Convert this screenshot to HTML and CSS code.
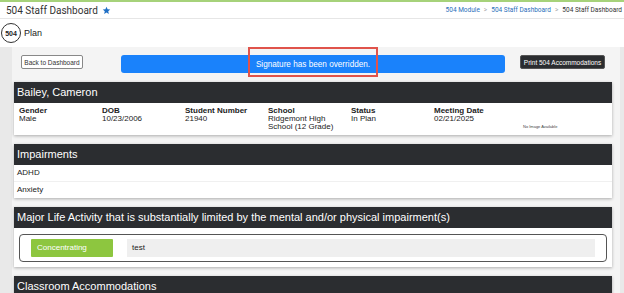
FILE: index.html
```html
<!DOCTYPE html>
<html lang="en">
<head>
<meta name="viewport" content="width=device-width, initial-scale=1">
<title>504 Plan</title>
<link rel="stylesheet" href="styles.css">
</head>
<body>
<div class="topbar">
    <div class="page-title">504 Staff Dashboard
        <svg class="star" viewBox="0 0 24 24" width="9" height="9"><path d="M12 2l2.9 6.9 7.1.6-5.4 4.7 1.7 7.3L12 17.6 5.7 21.5l1.7-7.3L2 9.5l7.1-.6z" fill="#1f6fc5"/></svg>
    </div>
    <div class="crumbs">
        <a href="#">504 Module</a><span class="sep">&gt;</span><a href="#">504 Staff Dashboard</a><span class="sep">&gt;</span><span>504 Staff Dashboard</span>
    </div>
</div>
<div class="planbar">
    <span class="badge">504</span><span class="plan-label">Plan</span>
</div>

<div class="main">
    <div class="panel">
        <div class="toolbar">
            <button class="btn-light">Back to Dashboard</button>
            <div class="alert">Signature has been overridden.<span class="highlight"></span></div>
            <button class="btn-dark">Print 504 Accommodations</button>
        </div>

        <div class="card">
            <div class="card-head">Bailey, Cameron</div>
            <div class="info">
                <div class="field"><b>Gender</b><span>Male</span></div>
                <div class="field"><b>DOB</b><span>10/23/2006</span></div>
                <div class="field"><b>Student Number</b><span>21940</span></div>
                <div class="field"><b>School</b><span>Ridgemont High School (12 Grade)</span></div>
                <div class="field"><b>Status</b><span>In Plan</span></div>
                <div class="field"><b>Meeting Date</b><span>02/21/2025</span></div>
                <div class="photo">No Image Available</div>
            </div>
        </div>

        <div class="card">
            <div class="card-head">Impairments</div>
            <div class="row">ADHD</div>
            <div class="row">Anxiety</div>
        </div>

        <div class="card">
            <div class="card-head">Major Life Activity that is substantially limited by the mental and/or physical impairment(s)</div>
            <div class="activity-wrap">
                <div class="activity">
                    <div class="tag">Concentrating</div>
                    <div class="note">test</div>
                </div>
            </div>
        </div>

        <div class="card">
            <div class="card-head">Classroom Accommodations</div>
        </div>
    </div>
</div>
</body>
</html>
```

FILE: styles.css
```css
body {
    margin: 0;
    font-family: "Liberation Sans", Arial, sans-serif;
    color: #222;
    background-color: #fff;
    height: 293px;
    overflow: hidden;
}

.topbar {
    display: flex;
    justify-content: space-between;
    align-items: center;
    height: 16px;
    border-top: 2px solid #a6d27a;
    border-bottom: 1px solid #e6e6e6;
    padding: 0 2px 0 6px;
}
.page-title {
    font-family: Roboto, sans-serif;
    font-size: 10px;
    color: #333;
    display: flex;
    align-items: center;
    gap: 4px;
}
.crumbs {
    font-family: Roboto, sans-serif;
    font-size: 6.5px;
    color: #333;
}
.crumbs a {
    color: #2a6fba;
    text-decoration: none;
}
.crumbs .sep {
    color: #aaa;
    margin: 0 4px;
}

.planbar {
    height: 28px;
    display: flex;
    align-items: center;
    padding-left: 1px;
}
.badge {
    width: 18px;
    height: 18px;
    border: 1.5px solid #333;
    border-radius: 50%;
    font-size: 7px;
    font-weight: bold;
    display: flex;
    align-items: center;
    justify-content: center;
}
.plan-label {
    font-size: 9px;
    margin-left: 3px;
}

.main {
    background-color: #e9e9e9;
    padding-left: 12px;
    height: 246px;
}
.panel {
    background-color: #f4f4f4;
    width: 606px;
    height: 100%;
    padding: 8px 0 0 2px;
}

.toolbar {
    display: flex;
    align-items: flex-start;
    padding-left: 7px;
    margin-bottom: 9px;
}
.btn-light {
    width: 62px;
    height: 14px;
    padding: 0;
    font-family: "Liberation Sans", Arial, sans-serif;
    font-size: 6.5px;
    color: #333;
    background-color: #fff;
    border: 1px solid #888;
    border-radius: 2px;
}
.alert {
    position: relative;
    width: 384px;
    height: 18px;
    margin-left: 38px;
    background-color: #1a82fb;
    border-radius: 3px;
    color: #fff;
    font-size: 8.2px;
    display: flex;
    align-items: center;
    justify-content: center;
}
.highlight {
    position: absolute;
    left: 127px;
    top: -8px;
    width: 126px;
    height: 26px;
    border: 2px solid #e0534b;
}
.btn-dark {
    width: 85px;
    height: 14px;
    margin-left: 15px;
    padding: 0;
    font-family: "Liberation Sans", Arial, sans-serif;
    font-size: 6.5px;
    color: #fff;
    background-color: #2b2d30;
    border: 1px solid #555;
    border-radius: 2px;
}

.card {
    width: 598px;
    background-color: #fff;
    box-shadow: 0 1px 3px rgba(0, 0, 0, 0.3);
    margin-bottom: 9px;
}
.card-head {
    height: 21px;
    line-height: 21px;
    background-color: #2b2d30;
    color: #fff;
    font-size: 11px;
    padding-left: 3px;
    white-space: nowrap;
    overflow: hidden;
}

.info {
    display: grid;
    grid-template-columns: repeat(6, 83px) 1fr;
    padding: 4px 0 5px 5px;
    height: 23px;
}
.field {
    display: flex;
    flex-direction: column;
    font-size: 8px;
    line-height: 8px;
}
.field span {
    padding-right: 6px;
}
.photo {
    font-size: 4px;
    color: #444;
    align-self: end;
    padding-left: 6px;
    margin-bottom: 2px;
}

.row {
    height: 16px;
    line-height: 16px;
    font-size: 8px;
    padding-left: 3px;
    border-bottom: 1px solid #f0f0f0;
}
.row:last-child {
    border-bottom: none;
}

.activity-wrap {
    padding: 6px 5px 5px 5px;
}
.activity {
    display: flex;
    gap: 14px;
    padding: 4px 11px 4px 11px;
    border: 1.5px solid #555;
    border-radius: 4px;
}
.tag {
    width: 76px;
    height: 18px;
    line-height: 18px;
    padding-left: 6px;
    background-color: #8dc63f;
    color: #fff;
    font-size: 8px;
    border-radius: 1px;
}
.note {
    flex: 1;
    height: 18px;
    line-height: 18px;
    padding-left: 5px;
    background-color: #efefef;
    font-size: 8px;
}
```
